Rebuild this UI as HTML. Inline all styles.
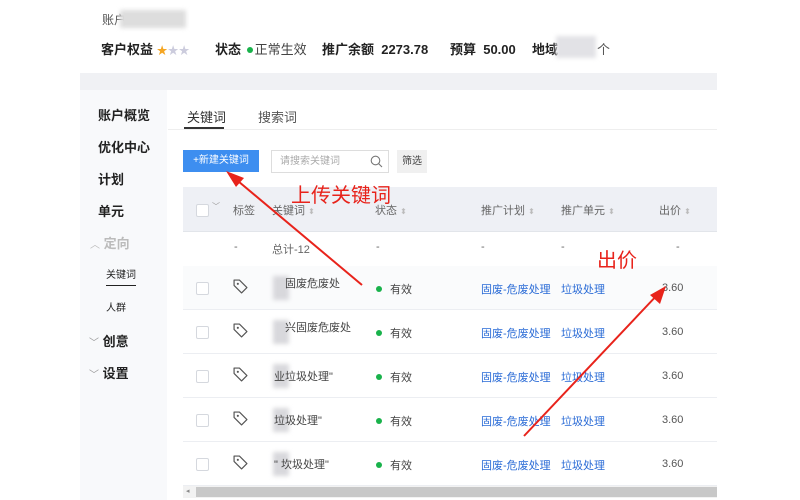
<!DOCTYPE html>
<html><head><meta charset="utf-8"><style>
*{margin:0;padding:0;box-sizing:border-box}
body{width:800px;height:500px;background:#fff;position:relative;overflow:hidden;font-family:"Liberation Sans","Noto Sans CJK SC",sans-serif;color:#333;font-size:12px}
.a{position:absolute;white-space:nowrap}
.b{font-weight:bold;color:#222;font-size:13px}
.blur{background:#ddd;filter:blur(2px)}
.hd{color:#666;font-size:11px}
.sort{color:#bbb;font-size:8px}
.cb{width:13px;height:13px;border:1px solid #d5d8de;background:#fff;border-radius:2px}
.lnk{color:#2a6bd6;font-size:11px}
.dot{width:6px;height:6px;border-radius:50%;background:#19b24b;display:inline-block;margin-right:8px;vertical-align:1px}
.row{position:absolute;left:183px;width:534px;height:44px;border-bottom:1px solid #eceef2}
</style></head><body>
<div class="a" style="left:102px;top:11px;color:#555">账户</div>
<div class="a blur" style="left:120px;top:10px;width:66px;height:18px"></div>
<div class="a b" style="left:101px;top:39px">客户权益 <span style="color:#f5a623;font-size:11px">★</span><span style="color:#ccd;font-size:11px">★★</span></div>
<div class="a b" style="left:215px;top:39px">状态 <span class="dot" style="margin:0 2px 0 2px"></span><span style="font-weight:normal;color:#444">正常生效</span></div>
<div class="a b" style="left:322px;top:39px">推广余额&nbsp; 2273.78</div>
<div class="a b" style="left:450px;top:39px">预算&nbsp; 50.00</div>
<div class="a b" style="left:532px;top:39px">地域</div>
<div class="a blur" style="left:556px;top:36px;width:40px;height:22px;background:#e2e2e6"></div>
<div class="a" style="left:597px;top:39px;color:#555;font-size:13px">个</div>
<div class="a" style="left:80px;top:73px;width:637px;height:17px;background:#f0f1f4"></div>
<div class="a" style="left:80px;top:90px;width:87px;height:410px;background:#f8f9fb"></div>
<div class="a b" style="left:98px;top:105px">账户概览</div>
<div class="a b" style="left:98px;top:137px">优化中心</div>
<div class="a b" style="left:98px;top:169px">计划</div>
<div class="a b" style="left:98px;top:201px">单元</div>
<div class="a" style="left:90px;top:233px;color:#bbb;font-size:13px;font-weight:bold"><span style="font-weight:normal;font-size:10px">︿</span> 定向</div>
<div class="a" style="left:106px;top:266px;font-size:10px;color:#222;border-bottom:1px solid #222;padding-bottom:4px">关键词</div>
<div class="a" style="left:106px;top:299px;font-size:10px;color:#222">人群</div>
<div class="a b" style="left:89px;top:331px"><span style="font-weight:normal;color:#999;font-size:10px">﹀</span> 创意</div>
<div class="a b" style="left:89px;top:363px"><span style="font-weight:normal;color:#999;font-size:10px">﹀</span> 设置</div>
<div class="a" style="left:187px;top:107px;font-size:13px;color:#333">关键词</div>
<div class="a" style="left:184px;top:127px;width:40px;height:2px;background:#333"></div>
<div class="a" style="left:168px;top:129px;width:549px;height:1px;background:#eee"></div>
<div class="a" style="left:258px;top:107px;font-size:13px;color:#555">搜索词</div>
<div class="a" style="left:183px;top:150px;width:76px;height:22px;background:#3d8ef0;color:#fff;font-size:10px;text-align:center;line-height:22px">+新建关键词</div>
<div class="a" style="left:271px;top:150px;width:118px;height:23px;border:1px solid #ddd;color:#aaa;font-size:10px;line-height:21px;padding-left:8px">请搜索关键词<svg style="position:absolute;right:5px;top:4px" width="13" height="13" viewBox="0 0 13 13"><circle cx="5.5" cy="5.5" r="4.3" fill="none" stroke="#777" stroke-width="1.1"/><line x1="8.6" y1="8.6" x2="12" y2="12" stroke="#777" stroke-width="1.1"/></svg></div>
<div class="a" style="left:397px;top:150px;width:30px;height:23px;background:#f0f0f0;font-size:10px;line-height:23px;text-align:center;color:#444">筛选</div>
<div class="a" style="left:183px;top:187px;width:534px;height:45px;background:#eef0f5;border-bottom:1px solid #e2e5ea"></div>
<div class="a cb" style="left:196px;top:204px"></div>
<div class="a hd" style="left:212px;top:201px;font-size:8px;color:#999">﹀</div>
<div class="a hd" style="left:233px;top:202px">标签</div>
<div class="a hd" style="left:272px;top:202px">关键词 <span class="sort">⬍</span></div>
<div class="a hd" style="left:375px;top:202px">状态 <span class="sort">⬍</span></div>
<div class="a hd" style="left:481px;top:202px">推广计划 <span class="sort">⬍</span></div>
<div class="a hd" style="left:561px;top:202px">推广单元 <span class="sort">⬍</span></div>
<div class="a hd" style="left:659px;top:202px">出价 <span class="sort">⬍</span></div>
<div class="row" style="top:232px"></div>
<div class="a hd" style="left:234px;top:241px">-</div><div class="a hd" style="left:272px;top:241px">总计-12</div><div class="a hd" style="left:376px;top:241px">-</div><div class="a hd" style="left:481px;top:241px">-</div><div class="a hd" style="left:561px;top:241px">-</div><div class="a hd" style="left:676px;top:241px">-</div>
<div class="row" style="top:266px;background:#fafbfc"></div>
<div class="row" style="top:310px"></div>
<div class="row" style="top:354px"></div>
<div class="row" style="top:398px"></div>
<div class="row" style="top:442px"></div>
<div id="rows"></div>
<script>
var t=["固废危废处","兴固废危废处","业垃圾处理\"","垃圾处理\"","\"  坎圾处理\""];
var h="";
for(var i=0;i<5;i++){var y=266+i*44;
h+='<div class="a cb" style="left:196px;top:'+(y+16)+'px"></div>';
h+='<svg class="a" style="left:233px;top:'+(y+13)+'px" width="15" height="15" viewBox="0 0 14 14"><path d="M1 1h5l7 7-5 5-7-7z" fill="none" stroke="#555" stroke-width="1.1" stroke-linejoin="round"/><circle cx="4.5" cy="4.5" r="1" fill="#555"/></svg>';
h+='<div class="a blur" style="left:273px;top:'+(y+10)+'px;width:16px;height:24px;background:#d8d8dc"></div>';
h+='<div class="a hd" style="left:'+(i<2?285:274)+'px;top:'+(y+(i<2?9:14))+'px;color:#444">'+t[i]+'</div>';
h+='<div class="a hd" style="left:376px;top:'+(y+15)+'px;color:#444"><span class="dot"></span>有效</div>';
h+='<div class="a lnk" style="left:481px;top:'+(y+15)+'px">固废-危废处理</div>';
h+='<div class="a lnk" style="left:561px;top:'+(y+15)+'px">垃圾处理</div>';
h+='<div class="a hd" style="left:662px;top:'+(y+16)+'px;color:#555">3.60</div>';}
document.getElementById('rows').innerHTML=h;
</script>
<div class="a" style="left:183px;top:486px;width:534px;height:12px;background:#f2f2f2"></div>
<div class="a" style="left:196px;top:487px;width:521px;height:10px;background:#c8c8c8"></div>
<div class="a" style="left:186px;top:487px;font-size:7px;color:#888">◂</div>
<div class="a" style="left:291px;top:179px;color:#e8231b;font-size:20px">上传关键词</div>
<div class="a" style="left:597px;top:244px;color:#e8231b;font-size:20px">出价</div>
<svg class="a" style="left:0;top:0" width="800" height="500">
<line x1="362" y1="285" x2="232" y2="176" stroke="#e8231b" stroke-width="2"/>
<polygon points="226,171 244,178 236,187" fill="#e8231b"/>
<line x1="524" y1="436" x2="660" y2="292" stroke="#e8231b" stroke-width="2"/>
<polygon points="666,286 660,304 650,295" fill="#e8231b"/>
</svg>
</body></html>
